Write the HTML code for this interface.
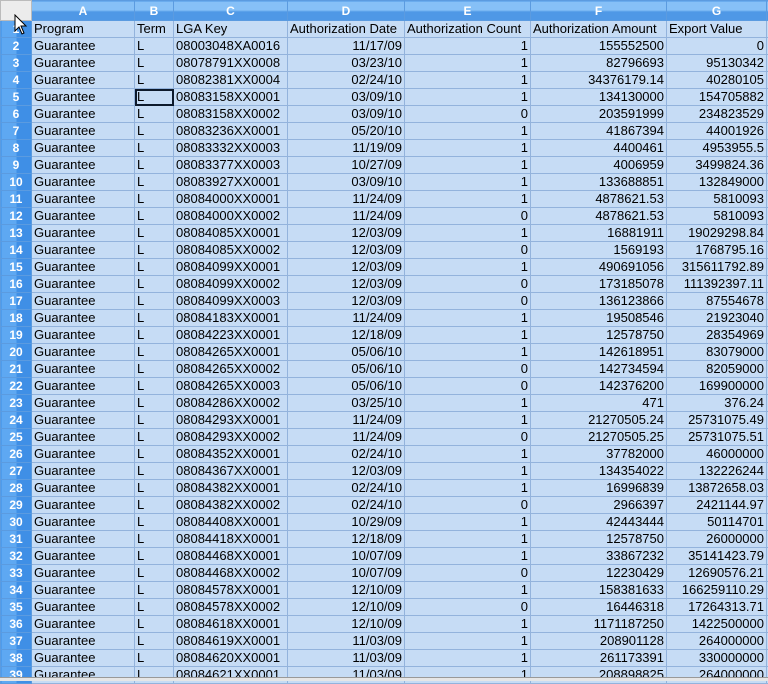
<!DOCTYPE html>
<html><head><meta charset="utf-8"><style>
html,body{margin:0;padding:0;width:768px;height:680px;overflow:hidden;background:#c6dcf5;}
table{border-collapse:collapse;table-layout:fixed;width:776px;font-family:"Liberation Sans",Arial,sans-serif;font-size:13px;color:#000;position:absolute;left:0;top:0;}
td{border:1px solid #93b3dc;height:16px;padding:0 2px;white-space:nowrap;overflow:hidden;line-height:16px;background:#c6dcf5;}
tr.h td{height:19px;background:linear-gradient(#86c0f7 0,#86c0f7 45%,#4f98e6 55%,#4f98e6 100%);color:#fff;font-weight:bold;text-align:center;border-color:#5b9be0;font-size:12px;}
td.rh{background:linear-gradient(90deg,#5ea8f2 0,#5ea8f2 48%,#3f8fe6 52%,#3f8fe6 100%);color:#fff;font-weight:bold;text-align:center;border-color:#5b9be0;padding:0;font-size:12px;}
tr.h td.corner{background:#ececec;border-color:#bbb;}
.r{text-align:right;}
.sel{outline:2px solid #0d1a2c;outline-offset:-2px;}
.bot{position:absolute;left:0;top:677px;width:768px;height:3px;background:#e6e6e6;border-top:1px solid #999;}
</style></head><body>
<table>
<colgroup><col style="width:31px"><col style="width:103px"><col style="width:39px"><col style="width:114px"><col style="width:117px"><col style="width:126px"><col style="width:136px"><col style="width:100px"><col style="width:10px"></colgroup>
<tr class="h"><td class="corner"></td><td>A</td><td>B</td><td>C</td><td>D</td><td>E</td><td>F</td><td>G</td><td></td></tr>
<tr><td class="rh">1</td><td>Program</td><td>Term</td><td>LGA Key</td><td>Authorization Date</td><td>Authorization Count</td><td>Authorization Amount</td><td>Export Value</td><td></td></tr>
<tr><td class="rh">2</td><td>Guarantee</td><td>L</td><td>08003048XA0016</td><td class="r">11/17/09</td><td class="r">1</td><td class="r">155552500</td><td class="r">0</td><td></td></tr>
<tr><td class="rh">3</td><td>Guarantee</td><td>L</td><td>08078791XX0008</td><td class="r">03/23/10</td><td class="r">1</td><td class="r">82796693</td><td class="r">95130342</td><td></td></tr>
<tr><td class="rh">4</td><td>Guarantee</td><td>L</td><td>08082381XX0004</td><td class="r">02/24/10</td><td class="r">1</td><td class="r">34376179.14</td><td class="r">40280105</td><td></td></tr>
<tr><td class="rh">5</td><td>Guarantee</td><td class="sel">L</td><td>08083158XX0001</td><td class="r">03/09/10</td><td class="r">1</td><td class="r">134130000</td><td class="r">154705882</td><td></td></tr>
<tr><td class="rh">6</td><td>Guarantee</td><td>L</td><td>08083158XX0002</td><td class="r">03/09/10</td><td class="r">0</td><td class="r">203591999</td><td class="r">234823529</td><td></td></tr>
<tr><td class="rh">7</td><td>Guarantee</td><td>L</td><td>08083236XX0001</td><td class="r">05/20/10</td><td class="r">1</td><td class="r">41867394</td><td class="r">44001926</td><td></td></tr>
<tr><td class="rh">8</td><td>Guarantee</td><td>L</td><td>08083332XX0003</td><td class="r">11/19/09</td><td class="r">1</td><td class="r">4400461</td><td class="r">4953955.5</td><td></td></tr>
<tr><td class="rh">9</td><td>Guarantee</td><td>L</td><td>08083377XX0003</td><td class="r">10/27/09</td><td class="r">1</td><td class="r">4006959</td><td class="r">3499824.36</td><td></td></tr>
<tr><td class="rh">10</td><td>Guarantee</td><td>L</td><td>08083927XX0001</td><td class="r">03/09/10</td><td class="r">1</td><td class="r">133688851</td><td class="r">132849000</td><td></td></tr>
<tr><td class="rh">11</td><td>Guarantee</td><td>L</td><td>08084000XX0001</td><td class="r">11/24/09</td><td class="r">1</td><td class="r">4878621.53</td><td class="r">5810093</td><td></td></tr>
<tr><td class="rh">12</td><td>Guarantee</td><td>L</td><td>08084000XX0002</td><td class="r">11/24/09</td><td class="r">0</td><td class="r">4878621.53</td><td class="r">5810093</td><td></td></tr>
<tr><td class="rh">13</td><td>Guarantee</td><td>L</td><td>08084085XX0001</td><td class="r">12/03/09</td><td class="r">1</td><td class="r">16881911</td><td class="r">19029298.84</td><td></td></tr>
<tr><td class="rh">14</td><td>Guarantee</td><td>L</td><td>08084085XX0002</td><td class="r">12/03/09</td><td class="r">0</td><td class="r">1569193</td><td class="r">1768795.16</td><td></td></tr>
<tr><td class="rh">15</td><td>Guarantee</td><td>L</td><td>08084099XX0001</td><td class="r">12/03/09</td><td class="r">1</td><td class="r">490691056</td><td class="r">315611792.89</td><td></td></tr>
<tr><td class="rh">16</td><td>Guarantee</td><td>L</td><td>08084099XX0002</td><td class="r">12/03/09</td><td class="r">0</td><td class="r">173185078</td><td class="r">111392397.11</td><td></td></tr>
<tr><td class="rh">17</td><td>Guarantee</td><td>L</td><td>08084099XX0003</td><td class="r">12/03/09</td><td class="r">0</td><td class="r">136123866</td><td class="r">87554678</td><td></td></tr>
<tr><td class="rh">18</td><td>Guarantee</td><td>L</td><td>08084183XX0001</td><td class="r">11/24/09</td><td class="r">1</td><td class="r">19508546</td><td class="r">21923040</td><td></td></tr>
<tr><td class="rh">19</td><td>Guarantee</td><td>L</td><td>08084223XX0001</td><td class="r">12/18/09</td><td class="r">1</td><td class="r">12578750</td><td class="r">28354969</td><td></td></tr>
<tr><td class="rh">20</td><td>Guarantee</td><td>L</td><td>08084265XX0001</td><td class="r">05/06/10</td><td class="r">1</td><td class="r">142618951</td><td class="r">83079000</td><td></td></tr>
<tr><td class="rh">21</td><td>Guarantee</td><td>L</td><td>08084265XX0002</td><td class="r">05/06/10</td><td class="r">0</td><td class="r">142734594</td><td class="r">82059000</td><td></td></tr>
<tr><td class="rh">22</td><td>Guarantee</td><td>L</td><td>08084265XX0003</td><td class="r">05/06/10</td><td class="r">0</td><td class="r">142376200</td><td class="r">169900000</td><td></td></tr>
<tr><td class="rh">23</td><td>Guarantee</td><td>L</td><td>08084286XX0002</td><td class="r">03/25/10</td><td class="r">1</td><td class="r">471</td><td class="r">376.24</td><td></td></tr>
<tr><td class="rh">24</td><td>Guarantee</td><td>L</td><td>08084293XX0001</td><td class="r">11/24/09</td><td class="r">1</td><td class="r">21270505.24</td><td class="r">25731075.49</td><td></td></tr>
<tr><td class="rh">25</td><td>Guarantee</td><td>L</td><td>08084293XX0002</td><td class="r">11/24/09</td><td class="r">0</td><td class="r">21270505.25</td><td class="r">25731075.51</td><td></td></tr>
<tr><td class="rh">26</td><td>Guarantee</td><td>L</td><td>08084352XX0001</td><td class="r">02/24/10</td><td class="r">1</td><td class="r">37782000</td><td class="r">46000000</td><td></td></tr>
<tr><td class="rh">27</td><td>Guarantee</td><td>L</td><td>08084367XX0001</td><td class="r">12/03/09</td><td class="r">1</td><td class="r">134354022</td><td class="r">132226244</td><td></td></tr>
<tr><td class="rh">28</td><td>Guarantee</td><td>L</td><td>08084382XX0001</td><td class="r">02/24/10</td><td class="r">1</td><td class="r">16996839</td><td class="r">13872658.03</td><td></td></tr>
<tr><td class="rh">29</td><td>Guarantee</td><td>L</td><td>08084382XX0002</td><td class="r">02/24/10</td><td class="r">0</td><td class="r">2966397</td><td class="r">2421144.97</td><td></td></tr>
<tr><td class="rh">30</td><td>Guarantee</td><td>L</td><td>08084408XX0001</td><td class="r">10/29/09</td><td class="r">1</td><td class="r">42443444</td><td class="r">50114701</td><td></td></tr>
<tr><td class="rh">31</td><td>Guarantee</td><td>L</td><td>08084418XX0001</td><td class="r">12/18/09</td><td class="r">1</td><td class="r">12578750</td><td class="r">26000000</td><td></td></tr>
<tr><td class="rh">32</td><td>Guarantee</td><td>L</td><td>08084468XX0001</td><td class="r">10/07/09</td><td class="r">1</td><td class="r">33867232</td><td class="r">35141423.79</td><td></td></tr>
<tr><td class="rh">33</td><td>Guarantee</td><td>L</td><td>08084468XX0002</td><td class="r">10/07/09</td><td class="r">0</td><td class="r">12230429</td><td class="r">12690576.21</td><td></td></tr>
<tr><td class="rh">34</td><td>Guarantee</td><td>L</td><td>08084578XX0001</td><td class="r">12/10/09</td><td class="r">1</td><td class="r">158381633</td><td class="r">166259110.29</td><td></td></tr>
<tr><td class="rh">35</td><td>Guarantee</td><td>L</td><td>08084578XX0002</td><td class="r">12/10/09</td><td class="r">0</td><td class="r">16446318</td><td class="r">17264313.71</td><td></td></tr>
<tr><td class="rh">36</td><td>Guarantee</td><td>L</td><td>08084618XX0001</td><td class="r">12/10/09</td><td class="r">1</td><td class="r">1171187250</td><td class="r">1422500000</td><td></td></tr>
<tr><td class="rh">37</td><td>Guarantee</td><td>L</td><td>08084619XX0001</td><td class="r">11/03/09</td><td class="r">1</td><td class="r">208901128</td><td class="r">264000000</td><td></td></tr>
<tr><td class="rh">38</td><td>Guarantee</td><td>L</td><td>08084620XX0001</td><td class="r">11/03/09</td><td class="r">1</td><td class="r">261173391</td><td class="r">330000000</td><td></td></tr>
<tr><td class="rh">39</td><td>Guarantee</td><td>L</td><td>08084621XX0001</td><td class="r">11/03/09</td><td class="r">1</td><td class="r">208898825</td><td class="r">264000000</td><td></td></tr>
</table>
<svg style="position:absolute;left:14px;top:14px" width="14" height="22" viewBox="0 0 14 22"><path d="M1 1 L1 17 L5 13 L8 20 L10 19 L7 12 L12 12 Z" fill="#fff" stroke="#000" stroke-width="1"/></svg>
<div class="bot"></div>
</body></html>
